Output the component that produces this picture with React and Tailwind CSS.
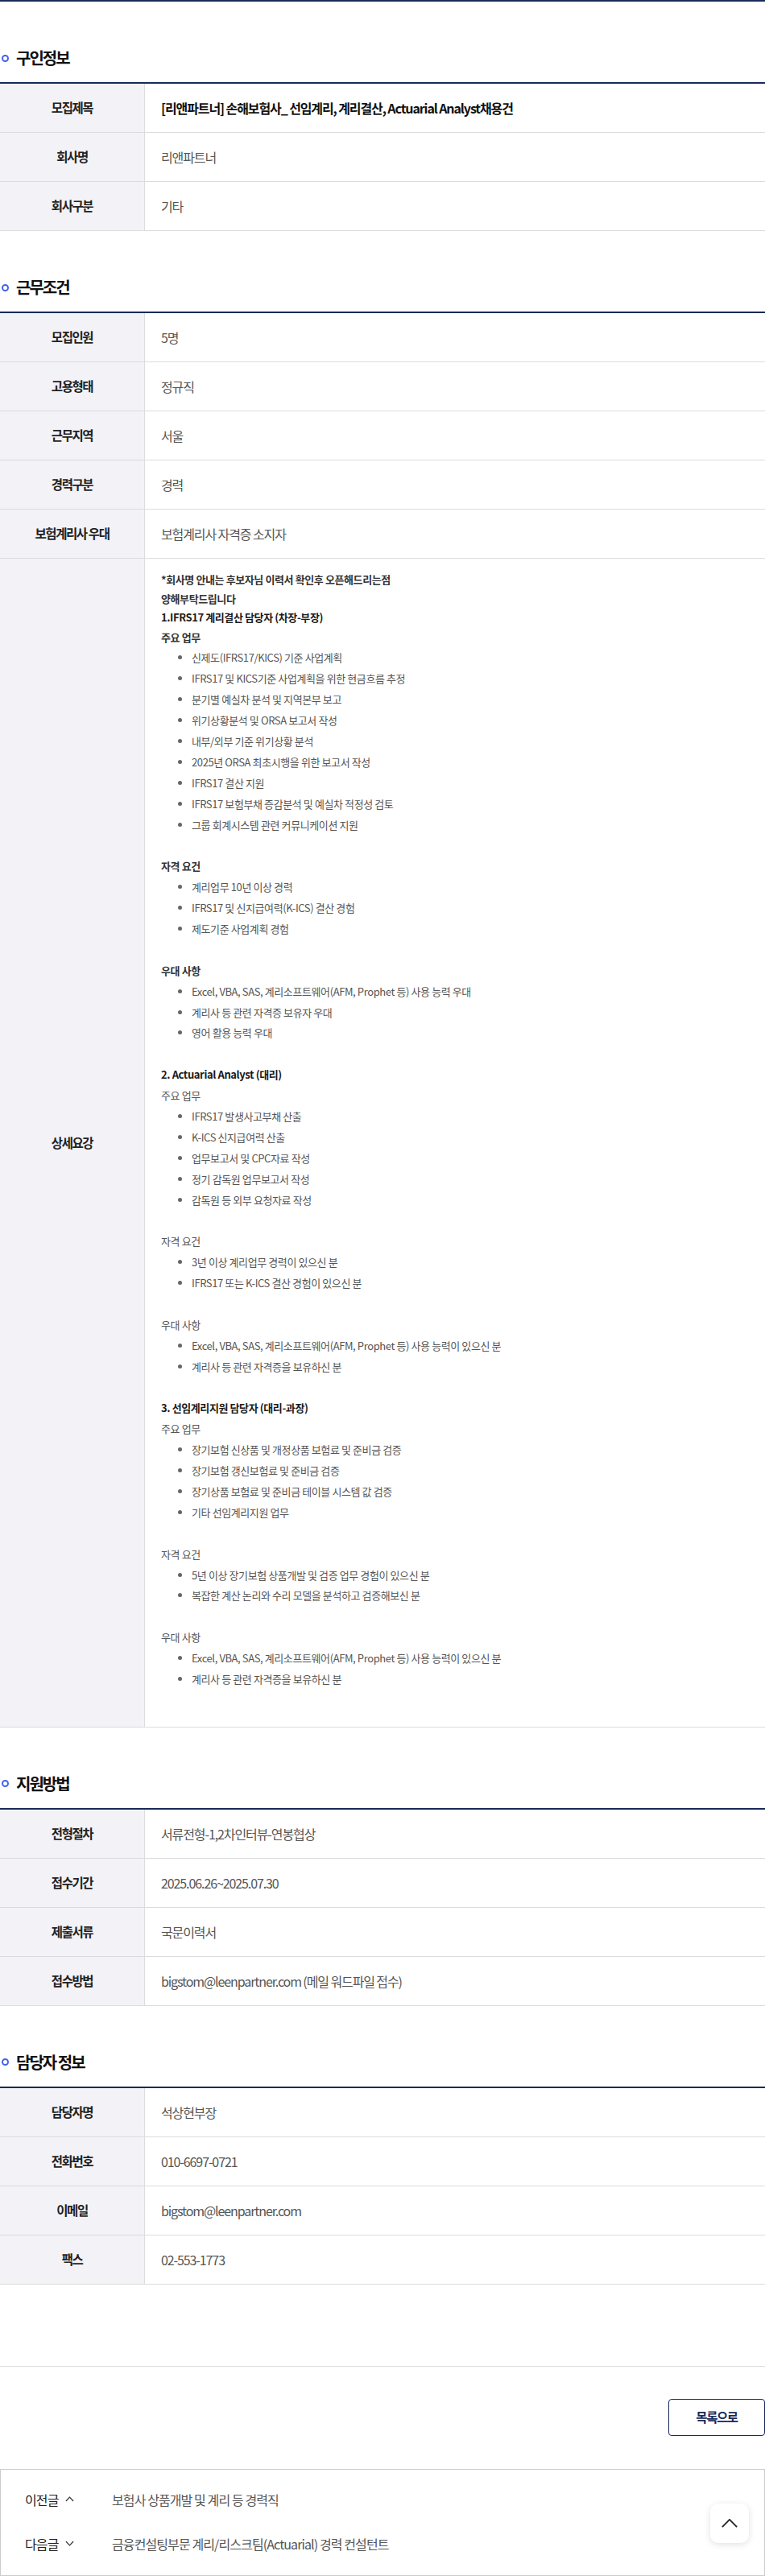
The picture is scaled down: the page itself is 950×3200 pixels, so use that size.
import React from 'react'

const NAVY = 'border-[#172a5a]'

const detailTop = [
  { t: 'b', s: '*회사명 안내는 후보자님 이력서 확인후 오픈해드리는점' },
  { t: 'b', s: '양해부탁드립니다' },
  { t: 'h', s: '1.IFRS17 계리결산 담당자 (차장-부장)' },
]

const detailLines = [
  { t: 'b', s: '주요 업무' },
  { t: 'li', s: '신제도(IFRS17/KICS) 기준 사업계획' },
  { t: 'li', s: 'IFRS17 및 KICS기준 사업계획을 위한 현금흐름 추정' },
  { t: 'li', s: '분기별 예실차 분석 및 지역본부 보고' },
  { t: 'li', s: '위기상황분석 및 ORSA 보고서 작성' },
  { t: 'li', s: '내부/외부 기준 위기상황 분석' },
  { t: 'li', s: '2025년 ORSA 최초시행을 위한 보고서 작성' },
  { t: 'li', s: 'IFRS17 결산 지원' },
  { t: 'li', s: 'IFRS17 보험부채 증감분석 및 예실차 적정성 검토' },
  { t: 'li', s: '그룹 회계시스템 관련 커뮤니케이션 지원' },
  { t: 'br' },
  { t: 'b', s: '자격 요건' },
  { t: 'li', s: '계리업무 10년 이상 경력' },
  { t: 'li', s: 'IFRS17 및 신지급여력(K-ICS) 결산 경험' },
  { t: 'li', s: '제도기준 사업계획 경험' },
  { t: 'br' },
  { t: 'b', s: '우대 사항' },
  { t: 'li', s: 'Excel, VBA, SAS, 계리소프트웨어(AFM, Prophet 등) 사용 능력 우대' },
  { t: 'li', s: '계리사 등 관련 자격증 보유자 우대' },
  { t: 'li', s: '영어 활용 능력 우대' },
  { t: 'br' },
  { t: 'h', s: '2. Actuarial Analyst (대리)' },
  { t: 'p', s: '주요 업무' },
  { t: 'li', s: 'IFRS17 발생사고부채 산출' },
  { t: 'li', s: 'K-ICS 신지급여력 산출' },
  { t: 'li', s: '업무보고서 및 CPC자료 작성' },
  { t: 'li', s: '정기 감독원 업무보고서 작성' },
  { t: 'li', s: '감독원 등 외부 요청자료 작성' },
  { t: 'br' },
  { t: 'p', s: '자격 요건' },
  { t: 'li', s: '3년 이상 계리업무 경력이 있으신 분' },
  { t: 'li', s: 'IFRS17 또는 K-ICS 결산 경험이 있으신 분' },
  { t: 'br' },
  { t: 'p', s: '우대 사항' },
  { t: 'li', s: 'Excel, VBA, SAS, 계리소프트웨어(AFM, Prophet 등) 사용 능력이 있으신 분' },
  { t: 'li', s: '계리사 등 관련 자격증을 보유하신 분' },
  { t: 'br' },
  { t: 'h', s: '3. 선임계리지원 담당자 (대리-과장)' },
  { t: 'p', s: '주요 업무' },
  { t: 'li', s: '장기보험 신상품 및 개정상품 보험료 및 준비금 검증' },
  { t: 'li', s: '장기보험 갱신보험료 및 준비금 검증' },
  { t: 'li', s: '장기상품 보험료 및 준비금 테이블 시스템 값 검증' },
  { t: 'li', s: '기타 선임계리지원 업무' },
  { t: 'br' },
  { t: 'p', s: '자격 요건' },
  { t: 'li', s: '5년 이상 장기보험 상품개발 및 검증 업무 경험이 있으신 분' },
  { t: 'li', s: '복잡한 계산 논리와 수리 모델을 분석하고 검증해보신 분' },
  { t: 'br' },
  { t: 'p', s: '우대 사항' },
  { t: 'li', s: 'Excel, VBA, SAS, 계리소프트웨어(AFM, Prophet 등) 사용 능력이 있으신 분' },
  { t: 'li', s: '계리사 등 관련 자격증을 보유하신 분' },
]

function Line({ item, tight }) {
  const lh = tight ? 'h-[23.5px] leading-[23.5px]' : 'h-[25.9px] leading-[25.9px]'
  if (item.t === 'br') return <div className={lh} />
  if (item.t === 'li')
    return (
      <ul className="list-disc pl-[38px] marker:text-[#666]">
        <li className={`${lh} text-[#555]`}>{item.s}</li>
      </ul>
    )
  if (item.t === 'h') return <p className={`${lh} font-bold text-[#1a1a1a]`}>{item.s}</p>
  if (item.t === 'b') return <p className={`${lh} font-semibold text-[#333]`}>{item.s}</p>
  return <p className={`${lh} text-[#555]`}>{item.s}</p>
}

function SectionTitle({ children }) {
  return (
    <div className="flex items-center h-[30px] mb-[15px]">
      <span className="w-[9px] h-[9px] ml-[2px] rounded-full border-2 border-[#4263eb] shrink-0" />
      <h2 className="ml-[9px] text-[20px] font-bold text-[#111] tracking-[-2px] leading-[30px]">{children}</h2>
    </div>
  )
}

function Label({ children }) {
  return (
    <div className="w-[180px] shrink-0 bg-[#f2f2f7] border-r border-[#dcdcdc] flex items-center justify-center text-[15.5px] font-bold text-[#222] tracking-[-1.4px]">
      {children}
    </div>
  )
}

function Row({ label, children, bold }) {
  return (
    <div className="flex h-[61px] border-b border-[#dcdcdc]">
      <Label>{label}</Label>
      <div className={`flex-1 flex items-center pl-[20px] text-[16px] tracking-[-1.1px] whitespace-nowrap ${bold ? 'font-bold text-[#111]' : 'text-[#555]'}`}>
        {children}
      </div>
    </div>
  )
}

function Table({ children }) {
  return <div className={`border-t-2 ${NAVY}`}>{children}</div>
}

function Chevron({ up, className }) {
  return (
    <svg viewBox="0 0 12 7" className={className} fill="none" stroke="currentColor" strokeWidth="1.3">
      {up ? <path d="M1 6.2 6 1l5 5.2" /> : <path d="M1 .8 6 6l5-5.2" />}
    </svg>
  )
}

export default function App() {
  return (
    <div className="w-[950px] bg-white font-['Noto_Sans_CJK_KR',sans-serif] overflow-hidden">
      <div className="h-[2px] bg-[#172a5a]" />

      <section className="pt-[55px]">
        <SectionTitle>구인정보</SectionTitle>
        <Table>
          <Row label="모집제목" bold>[리앤파트너] 손해보험사_ 선임계리, 계리결산, Actuarial Analyst채용건</Row>
          <Row label="회사명">리앤파트너</Row>
          <Row label="회사구분">기타</Row>
        </Table>
      </section>

      <section className="pt-[55px]">
        <SectionTitle>근무조건</SectionTitle>
        <Table>
          <Row label="모집인원">5명</Row>
          <Row label="고용형태">정규직</Row>
          <Row label="근무지역">서울</Row>
          <Row label="경력구분">경력</Row>
          <Row label="보험계리사 우대">보험계리사 자격증 소지자</Row>
          <div className="flex border-b border-[#dcdcdc]">
            <Label>상세요강</Label>
            <div className="flex-1 pl-[20px] pt-[14px] pb-[46px] text-[13px] tracking-[-0.4px] whitespace-nowrap">
              {detailTop.map((item, i) => (
                <Line key={'t' + i} item={item} tight />
              ))}
              {detailLines.map((item, i) => (
                <Line key={i} item={item} />
              ))}
            </div>
          </div>
        </Table>
      </section>

      <section className="pt-[55px]">
        <SectionTitle>지원방법</SectionTitle>
        <Table>
          <Row label="전형절차">서류전형-1,2차인터뷰-연봉협상</Row>
          <Row label="접수기간">2025.06.26~2025.07.30</Row>
          <Row label="제출서류">국문이력서</Row>
          <Row label="접수방법">bigstom@leenpartner.com (메일 워드파일 접수)</Row>
        </Table>
      </section>

      <section className="pt-[55px]">
        <SectionTitle>담당자 정보</SectionTitle>
        <Table>
          <Row label="담당자명">석상현부장</Row>
          <Row label="전화번호">010-6697-0721</Row>
          <Row label="이메일">bigstom@leenpartner.com</Row>
          <Row label="팩스">02-553-1773</Row>
        </Table>
      </section>

      <div className="mt-[101px] border-t border-[#dcdcdc] pt-[40px]">
        <div className="flex justify-end">
          <button className={`w-[120px] h-[46px] border ${NAVY} rounded-[4px] text-[15.5px] font-bold text-[#172a5a] tracking-[-1.4px]`}>
            목록으로
          </button>
        </div>

        <div className="relative mt-[41px] border border-[#cccccc] pl-[30px] pt-[19px] pb-[21px] flex flex-col gap-[19px]">
          <div className="flex items-center h-[36px] text-[16px] tracking-[-0.9px]">
            <div className="w-[108px] flex items-center text-[#222]">
              이전글
              <Chevron up className="ml-[9px] w-[11px] h-[7px] text-[#333]" />
            </div>
            <span className="text-[#555]">보험사 상품개발 및 계리 등 경력직</span>
          </div>
          <div className="flex items-center h-[36px] text-[16px] tracking-[-0.9px]">
            <div className="w-[108px] flex items-center text-[#222]">
              다음글
              <Chevron className="ml-[9px] w-[11px] h-[7px] text-[#333]" />
            </div>
            <span className="text-[#555]">금융컨설팅부문 계리/리스크팀(Actuarial) 경력 컨설턴트</span>
          </div>

          <div className="absolute right-[19px] top-[42px] w-[48px] h-[49px] rounded-[10px] bg-white shadow-[0_2px_8px_rgba(0,0,0,0.12)] flex items-center justify-center">
            <svg viewBox="0 0 22 12" className="w-[20px] h-[11px]" fill="none" stroke="#222" strokeWidth="2">
              <path d="M1 11 11 1l10 10" />
            </svg>
          </div>
        </div>
      </div>
    </div>
  )
}
